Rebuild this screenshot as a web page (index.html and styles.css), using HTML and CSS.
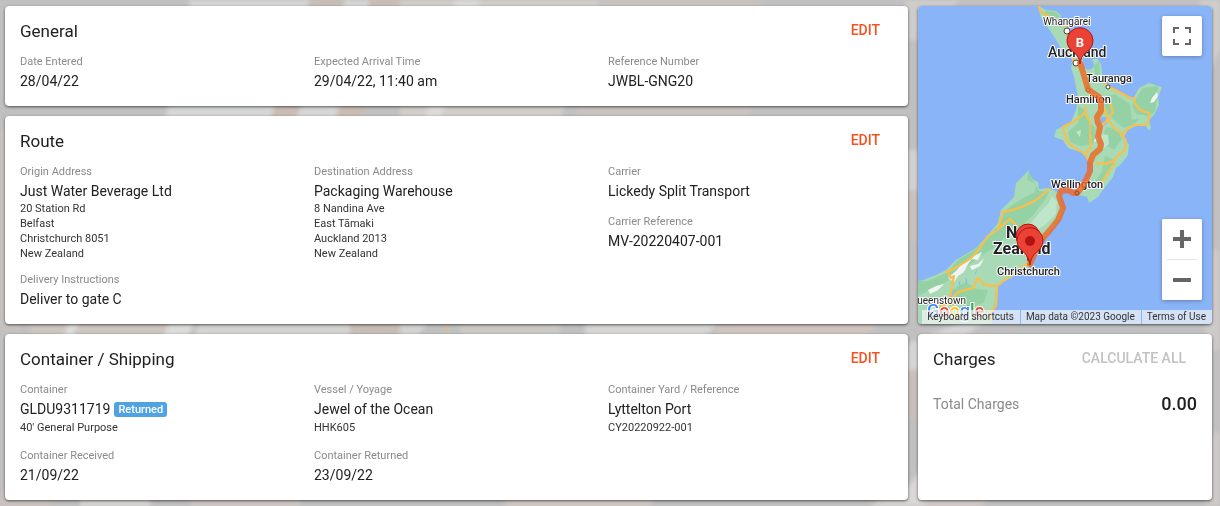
FILE: index.html
```html
<!DOCTYPE html>
<html lang="en">
<head>
  <meta charset="UTF-8">
  <meta name="viewport" content="width=device-width, initial-scale=1.0">
  <title>Job Details</title>
  <link rel="stylesheet" href="styles.css">
</head>
<body>
  <svg class="backdrop" viewBox="0 0 1220 506" preserveAspectRatio="none" aria-hidden="true">
    <rect width="1220" height="506" fill="#c1c0c0"/>
    <path d="M190 0H400L345 120H165z" fill="#d5d7d6"/>
    <path d="M310 0H345L295 120H270zM370 0H400L360 120H335z" fill="#c9bcb3"/>
    <path d="M400 0H600L560 120H400z" fill="#d2cdc8"/>
    <path d="M455 0H480L440 120H425z" fill="#dcdbd8"/>
    <path d="M600 0H760L750 120H575z" fill="#c9c3bf"/>
    <path d="M0 130L20 120V330H0z" fill="#c8c2bf"/>
    <path d="M30 320H180L170 345H30z" fill="#cdc5c0"/>
    <path d="M70 320H80L70 345H60zM170 320H195L185 345H160z" fill="#dcdcda"/>
    <path d="M200 320H430L410 345H190z" fill="#d3d3d2"/>
    <path d="M350 320H400V345H350z" fill="#c8bdb6"/>
    <path d="M445 320H448V345H445z" fill="#d9c29b"/>
    <path d="M460 320H560V345H460z" fill="#cbc8c6"/>
    <path d="M585 320H720L700 345H585z" fill="#d6d5d4"/>
    <path d="M720 320H880L860 345H710z" fill="#cfc4bf"/>
    <path d="M905 345L990 310H1000L905 380z" fill="#d6d5d5"/>
    <path d="M905 150H925V190H905z" fill="#d3d2d2"/>
    <path d="M905 190H925V240H905z" fill="#c9c1bd"/>
    <path d="M905 370H925V420H905z" fill="#c8c0bc"/>
    <path d="M905 0H960L920 40H905z" fill="#cfcdcb"/>
    <path d="M1200 0H1220V50L1205 80z" fill="#d0cecd"/>
    <path d="M1205 250H1220V350H1205zM1205 440L1220 430V506H1205z" fill="#cdcac9"/>
    <path d="M0 490H60L50 506H0z" fill="#cbc3bf"/>
    <path d="M80 490H150V506H80z" fill="#dad9d8"/>
    <path d="M190 490H300V506H190z" fill="#cfc9c6"/>
    <path d="M505 490H660L650 506H505z" fill="#d2cbc7"/>
    <path d="M890 490H1000L980 506H870z" fill="#d3cdca"/>
    <path d="M905 490L925 465V506H870z" fill="#dad8d7"/>
  </svg>

  <main class="layout">
    <section class="card general">
      <header class="card-header">
        <h2>General</h2>
        <button class="btn" type="button">EDIT</button>
      </header>
      <div class="columns">
        <dl class="column">
          <dt>Date Entered</dt>
          <dd>28/04/22</dd>
        </dl>
        <dl class="column">
          <dt>Expected Arrival Time</dt>
          <dd>29/04/22, 11:40 am</dd>
        </dl>
        <dl class="column">
          <dt>Reference Number</dt>
          <dd>JWBL-GNG20</dd>
        </dl>
      </div>
    </section>

    <section class="card route">
      <header class="card-header">
        <h2>Route</h2>
        <button class="btn" type="button">EDIT</button>
      </header>
      <div class="columns">
        <dl class="column">
          <dt>Origin Address</dt>
          <dd>Just Water Beverage Ltd</dd>
          <dd class="address">20 Station Rd<br>Belfast<br>Christchurch 8051<br>New Zealand</dd>
          <dt>Delivery Instructions</dt>
          <dd>Deliver to gate C</dd>
        </dl>
        <dl class="column">
          <dt>Destination Address</dt>
          <dd>Packaging Warehouse</dd>
          <dd class="address">8 Nandina Ave<br>East Tāmaki<br>Auckland 2013<br>New Zealand</dd>
        </dl>
        <dl class="column">
          <dt>Carrier</dt>
          <dd>Lickedy Split Transport</dd>
          <dt>Carrier Reference</dt>
          <dd>MV-20220407-001</dd>
        </dl>
      </div>
    </section>

    <section class="card shipping">
      <header class="card-header">
        <h2>Container / Shipping</h2>
        <button class="btn" type="button">EDIT</button>
      </header>
      <div class="columns">
        <dl class="column">
          <dt>Container</dt>
          <dd class="with-tag">GLDU9311719 <span class="tag">Returned</span></dd>
          <dd class="sub">40' General Purpose</dd>
          <dt>Container Received</dt>
          <dd>21/09/22</dd>
        </dl>
        <dl class="column">
          <dt>Vessel / Yoyage</dt>
          <dd>Jewel of the Ocean</dd>
          <dd class="sub">HHK605</dd>
          <dt>Container Returned</dt>
          <dd>23/09/22</dd>
        </dl>
        <dl class="column">
          <dt>Container Yard / Reference</dt>
          <dd>Lyttelton Port</dd>
          <dd class="sub">CY20220922-001</dd>
        </dl>
      </div>
    </section>

    <section class="card map">
      <svg class="map-canvas" viewBox="0 0 294 318" preserveAspectRatio="xMinYMin slice" role="img" aria-label="Map">
        <rect width="294" height="318" fill="#8ab4f8"/>
        <!-- land -->
        <g fill="#a8dab5">
          <path d="M120 0L128 4L138 5L143 9L141 17L148 21L151 29L158 34L164 44L165 54L165 61L170 64L175 62L176 59L174 53L180 53L183 59L185 74L191 81L201 86L211 93L216 91L221 82L231 77L244 81L240 91L241 99L236 109L231 114L233 122L231 125L228 120L218 120L210 124L206 131L211 139L210 149L203 158L198 162L195 171L185 184L180 191L171 197L169 191L161 189L158 184L165 179L171 172L175 164L173 154L168 151L163 146L150 142L145 134L136 131L138 124L145 120L153 116L158 104L160 91L156 71L153 62L155 54L145 46L140 37L133 26L123 12z"/>
          <path d="M111 164L110 171L120 176L121 183L131 182L141 187L142 195L145 204L140 217L126 232L115 244L111 254L116 259L108 263L98 269L80 279L78 287L76 304L73 318H0V275L5 274L18 269L28 264L38 254L58 242L70 229L80 217L83 204L96 191L98 177z"/>
        </g>
        <g fill="#94d2a5">
          <path d="M127 5L137 6L142 10L136 15L128 12zM176 59L181 56L182 70L178 74zM225 82L240 80L239 92L237 106L229 110L218 108L214 100L218 92z"/>
          <path d="M185 91L197 88L212 98L214 114L222 112L216 118L206 122L198 116L188 106zM160 100L168 104L171 115L178 124L175 138L162 140L152 136L150 126L160 117zM188 121L200 124L204 133L196 144L187 138L185 129zM187 150L197 154L192 166L180 180L176 178L184 165z"/>
          <path d="M111 166L109 174L118 178L117 186L105 192L93 200L84 208L82 218L70 230L58 243L40 254L30 266L10 275H0V290L12 284L28 276L42 266L60 252L78 240L90 228L104 220L116 208L128 192L131 186L121 185z"/>
          <path d="M34 284L48 276L58 283L70 284L66 296L54 302L40 298z"/>
        </g>
        <g fill="#bfe5ca">
          <path d="M134 190L139 196L138 208L128 218L116 226L106 226L114 216L122 206L130 198z"/>
          <path d="M183 128L190 129L191 138L186 142zM158 126L163 124L162 131zM10 300L26 290L34 296L24 310L8 312z"/>
        </g>
        <g fill="#f1f5f2">
          <path d="M64 246L60 254L54 253L50 258L46 266L40 270L36 276L30 272L38 265L44 258L52 252zM26 278L20 284L12 288L10 284L18 280zM239 86L234 92L232 97L236 96L240 90zM52 260L60 258L66 252L62 260L54 264zM178 130L181 134L176 136z"/>
        </g>
        <path d="M184 111l4 1 1 5-4 3-2-4zM41 275l1 5M48 272l1 6M36 284l-3 8M57 268l2-4" fill="#8ab4f8" stroke="#8ab4f8"/>
        <!-- highways -->
        <g class="road-case">
          <path id="roads" d="M121 0L122 5L128 9L137 13L148 21L150 31L156 42L155 55L159 60L163 58M185 76L191 81L201 86L212 92L217 92L217 98L222 104L231 107L231 113L228 119L216 119L208 124L204 129L208 135L207 144L200 149L196 155L186 158L178 157M187 102L188 108L190 114L198 124L206 129M192 96L195 106L190 114M190 114L184 119M168 100L167 107L155 116L145 121L147 127L149 136L157 142L166 147L172 156M167 107L172 116L172 127L173 141L168 147M197 157L190 166L182 180M178 157L190 158M131 182L128 186L118 194L106 200L95 204L85 206L81 220L80 224L70 230L62 242L52 253L37 262L29 266L33 272L36 270L34 280L32 292L34 300M80 223L92 213L98 219M111 258L103 262L85 275L79 280L78 300L72 306L74 314M78 280L67 279L60 272L55 282L40 286L32 296L18 303"/>
        </g>
        <use href="#roads" class="road"/>
        <!-- towns -->
        <g class="town">
          <circle cx="149" cy="25" r="3"/>
          <circle cx="158" cy="57" r="3"/>
          <circle cx="190" cy="81" r="2"/>
          <circle cx="170" cy="84" r="2"/>
        </g>
        <g class="map-label">
          <text x="125" y="19" class="light">Whangārei</text>
          <text x="130" y="51" class="city">Auckland</text>
          <text x="168" y="76">Tauranga</text>
          <text x="148" y="97">Hamilton</text>
          <text x="133" y="182">Wellington</text>
          <text x="88" y="232" class="country">New</text>
          <text x="75" y="248" class="country">Zealand</text>
          <text x="79" y="269">Christchurch</text>
          <text x="48" y="298" class="light end">Queenstown</text>
        </g>
        <!-- route -->
        <path class="route-line" d="M162 57L165 66L170 83L175 87L181 91L183 96L183 105L179 111L180 117L182 121L180 131L183 138L182 143L175 149L172 157L172 165L168 174L164 181L159 187L155 187L150 184L143 185L141 190L145 202L140 214L132 224L125 232L118 244L112 258"/>
        <circle cx="159" cy="187" r="2" class="route-stop"/>
        <!-- pins -->
        <g class="pin">
          <path d="M110 255C109 247 106 243 101 238A12 12 0 1 1 119 238C114 243 111 247 110 255z"/>
          <path d="M112 259C111 251 108 248 102 243A13 13 0 1 1 122 243C116 248 113 251 112 259z"/>
          <path d="M162 58C161 50 158 48 152 43A13 13 0 1 1 172 43C166 48 163 50 162 58z"/>
        </g>
        <circle cx="112" cy="235" r="5" fill="#b31412"/>
        <text x="162" y="41" class="pin-text">B</text>
        <text x="9" y="311" class="logo"><tspan fill="#4285f4">G</tspan><tspan fill="#ea4335">o</tspan><tspan fill="#fbbc04">o</tspan><tspan fill="#4285f4">g</tspan><tspan fill="#34a853">l</tspan><tspan fill="#ea4335">e</tspan></text>
      </svg>
      <button class="map-btn fullscreen" type="button" aria-label="Toggle fullscreen view">
        <svg width="18" height="18" viewBox="0 0 18 18"><path d="M0 0H6V2H2V6H0zM12 0H18V6H16V2H12zM0 12H2V16H6V18H0zM16 12H18V18H12V16H16z" fill="#666"/></svg>
      </button>
      <div class="zoom">
        <button class="map-btn" type="button" aria-label="Zoom in">
          <svg width="18" height="18" viewBox="0 0 18 18"><path d="M7 0H11V7H18V11H11V18H7V11H0V7H7z" fill="#666"/></svg>
        </button>
        <button class="map-btn" type="button" aria-label="Zoom out">
          <svg width="18" height="18" viewBox="0 0 18 18"><path d="M0 7H18V11H0z" fill="#666"/></svg>
        </button>
      </div>
      <div class="attribution">
        <button type="button">Keyboard shortcuts</button>
        <span>Map data ©2023 Google</span>
        <a href="#terms">Terms of Use</a>
      </div>
    </section>

    <section class="card charges">
      <header class="card-header">
        <h2>Charges</h2>
        <button class="btn" type="button" disabled>CALCULATE ALL</button>
      </header>
      <div class="total">
        <span>Total Charges</span>
        <strong>0.00</strong>
      </div>
    </section>
  </main>
</body>
</html>
```
FILE: styles.css
```css
* {
  box-sizing: border-box;
}
body {
  margin: 0;
  background: #c1c0c0;
  color: #212121;
  font-family: Roboto, sans-serif;
  font-size: 14px;
}
.backdrop {
  position: fixed;
  inset: 0;
  width: 100%;
  height: 100%;
  z-index: -1;
  filter: blur(2px);
}
button {
  font-family: inherit;
  border: none;
  cursor: pointer;
}
.layout {
  display: grid;
  grid-template-columns: 1fr 294px;
  grid-template-areas:
    "general map"
    "route map"
    "shipping charges";
  gap: 10px;
  padding: 6px 8px 6px 5px;
}
.card {
  background: #fff;
  border-radius: 4px;
  padding: 10px 6px 15px 15px;
  box-shadow: 0 1px 3px rgba(0, 0, 0, 0.6);
}
.general { grid-area: general; }
.route { grid-area: route; }
.shipping { grid-area: shipping; }
.map { grid-area: map; }
.charges { grid-area: charges; }

.card-header {
  display: flex;
  justify-content: space-between;
  align-items: center;
  height: 30px;
}
h2 {
  margin: 0;
  font-size: 17px;
  font-weight: 400;
}
.btn {
  background: none;
  color: #f4511e;
  font-size: 14px;
  font-weight: 500;
  line-height: 28px;
  padding: 0 22px 2px;
}
.charges .btn {
  padding-right: 20px;
}
.btn:disabled {
  color: #c2c2c2;
  cursor: default;
}

/* fields */
.columns {
  display: grid;
  grid-template-columns: repeat(3, 1fr);
  padding-top: 5px;
}
.column {
  margin: 0;
}
dt {
  color: #8a8a8a;
  font-size: 11px;
  line-height: 18px;
  padding-top: 2px;
}
dd {
  margin: 0;
  line-height: 20px;
}
dd + dt {
  margin-top: 10px;
}
.sub,
.address {
  color: #333;
  font-size: 11px;
  line-height: 15px;
}
.sub {
  margin-top: 1px;
}
.address + dt {
  margin-top: 8px;
}
.with-tag {
  display: flex;
  align-items: center;
  gap: 4px;
}
.tag {
  background: #4fa3e3;
  color: #fff;
  border-radius: 3px;
  font-size: 11px;
  font-weight: 500;
  line-height: 15px;
  padding: 0 4px;
}

/* charges */
.total {
  display: flex;
  justify-content: space-between;
  align-items: center;
  padding: 15px 9px 0 0;
  line-height: 30px;
  color: #8a8a8a;
}
.total strong {
  color: #212121;
  font-size: 18px;
  font-weight: 500;
}

/* map */
.map {
  position: relative;
  overflow: hidden;
  padding: 0;
}
.map-canvas {
  position: absolute;
  inset: 0;
  width: 100%;
  height: 100%;
}
.road-case path {
  fill: none;
  stroke: #f5c04f;
  stroke-width: 2;
  stroke-linejoin: round;
}
.road {
  fill: none;
  stroke: #ffe9a8;
  stroke-width: 1;
}
.town circle {
  fill: #fff;
  stroke: #444;
}
.map-label text {
  fill: #202124;
  stroke: #fff;
  stroke-width: 2px;
  stroke-linejoin: round;
  paint-order: stroke;
  font-size: 11px;
  font-weight: 500;
}
.map-label .light {
  font-size: 10px;
  font-weight: 400;
}
.map-label .end {
  text-anchor: end;
}
.map-label .city {
  font-size: 14px;
}
.map-label .country {
  font-size: 16px;
  font-weight: 700;
}
.route-line {
  fill: none;
  stroke: #f0651f;
  stroke-opacity: 0.8;
  stroke-width: 6;
  stroke-linejoin: round;
  stroke-linecap: round;
}
.route-stop {
  fill: none;
  stroke: #a3401a;
}
.pin path {
  fill: #ea4335;
  stroke: #b31412;
}
.pin-text {
  fill: #fff;
  font-size: 13px;
  font-weight: 700;
  text-anchor: middle;
}
.logo {
  stroke: #fff;
  stroke-width: 2px;
  paint-order: stroke;
  font-size: 18px;
  font-weight: 500;
}
.map-btn {
  display: flex;
  align-items: center;
  justify-content: center;
  width: 40px;
  height: 40px;
  padding: 0;
  background: #fff;
  border-radius: 2px;
}
.fullscreen {
  position: absolute;
  top: 10px;
  right: 10px;
  box-shadow: 0 1px 4px rgba(0, 0, 0, 0.3);
}
.zoom {
  position: absolute;
  right: 10px;
  bottom: 24px;
  background: #fff;
  border-radius: 2px;
  box-shadow: 0 1px 4px rgba(0, 0, 0, 0.3);
}
/* divider between the two zoom buttons */
.zoom::before {
  content: "";
  position: absolute;
  top: 40px;
  left: 5px;
  right: 5px;
  height: 1px;
  background: #e6e6e6;
}
.zoom .map-btn + .map-btn {
  margin-top: 1px;
}
.attribution {
  position: absolute;
  right: 0;
  bottom: 0;
  display: flex;
  gap: 1px;
}
.attribution > * {
  background: rgba(245, 245, 245, 0.7);
  color: #333;
  font-size: 10px;
  line-height: 14px;
  padding: 0 6px 0 5px;
  text-decoration: none;
  white-space: nowrap;
}
```
